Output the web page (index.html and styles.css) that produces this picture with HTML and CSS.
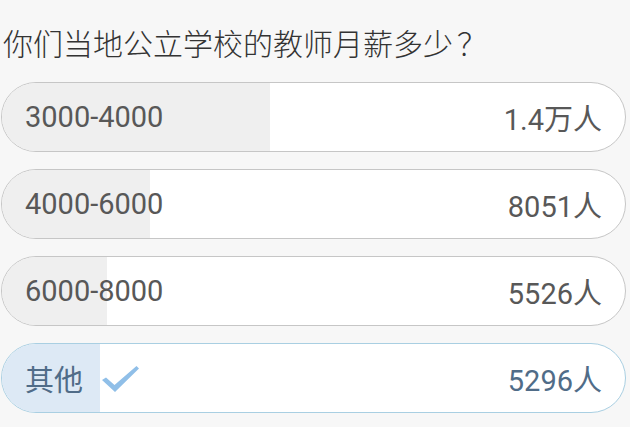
FILE: index.html
```html
<!DOCTYPE html>
<html lang="zh">
<head>
<meta charset="utf-8">
<link rel="stylesheet" href="styles.css">
</head>
<body>
<div class="poll">
  <h1 class="title">你们当地公立学校的教师月薪多少<span class="qmark">？</span></h1>
  <div class="options">
    <div class="pill">
      <div class="fill" style="width:43%"></div>
      <div class="row"><span class="label">3000-4000</span><span class="count">1.4万人</span></div>
    </div>
    <div class="pill">
      <div class="fill" style="width:23.8%"></div>
      <div class="row"><span class="label">4000-6000</span><span class="count">8051人</span></div>
    </div>
    <div class="pill">
      <div class="fill" style="width:16.8%"></div>
      <div class="row"><span class="label">6000-8000</span><span class="count">5526人</span></div>
    </div>
    <div class="pill selected">
      <div class="fill" style="width:15.8%"></div>
      <div class="row">
        <span class="label">其他<svg class="check" width="37" height="27" viewBox="0 0 37 27"><polygon points="0,14 4,11.5 12.5,19 34.5,0 37,2.5 13,26" fill="#90bfe8"/></svg></span>
        <span class="count">5296人</span>
      </div>
    </div>
  </div>
</div>
</body>
</html>
```

FILE: styles.css
```css
html, body {
  margin: 0;
  padding: 0;
  background: #f7f7f7;
}

body {
  font-family: Roboto, "Noto Sans CJK SC", sans-serif;
}

.poll {
  padding: 27px 4px 0 1px;
}

.title {
  margin: 0 0 24px 2px;
  font-family: "Noto Sans CJK SC", sans-serif;
  font-weight: 300;
  font-size: 30px;
  line-height: 31px;
  color: #333;
}

.qmark {
  margin-left: 4px;
}

.options {
  display: flex;
  flex-direction: column;
  gap: 17px;
}

.pill {
  display: grid;
  height: 70px;
  box-sizing: border-box;
  border: 1px solid #c6c6c6;
  border-radius: 35px;
  background: #fff;
  overflow: hidden;
}

.fill {
  grid-area: 1 / 1;
  background: #efefef;
}

.row {
  grid-area: 1 / 1;
  display: flex;
  align-items: center;
  justify-content: space-between;
  padding: 0 23px 0 23px;
  font-size: 29px;
  color: #585858;
}

.label {
  display: flex;
  align-items: center;
}

.check {
  margin-left: 19px;
  margin-top: 2px;
}

.selected {
  border-color: #a9cfe2;
}

.selected .fill {
  background: #dde9f5;
}

.selected .row {
  color: #506c88;
}
```
